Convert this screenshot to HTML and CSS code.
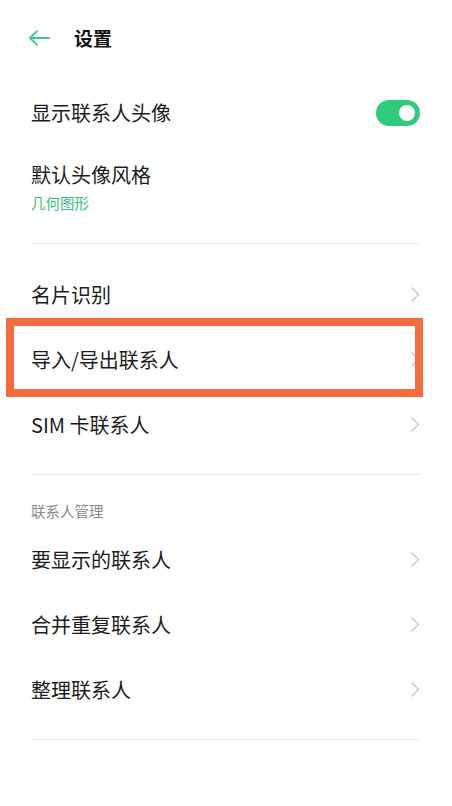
FILE: index.html
```html
<!DOCTYPE html>
<html lang="zh-CN">
<head>
<meta charset="utf-8">
<title>设置</title>
<link rel="stylesheet" href="styles.css">
</head>
<body>
<div class="page">
  <header class="topbar">
    <svg class="back" width="22" height="16" viewBox="0 0 22 16"><path d="M21 8H2M9 1.2L2 8l7 6.8" fill="none" stroke="#3ec886" stroke-width="1.8" stroke-linecap="round" stroke-linejoin="round"/></svg>
    <h1 class="title">设置</h1>
  </header>

  <section class="group group-first">
    <div class="row">
      <span class="label">显示联系人头像</span>
      <span class="switch"><span class="knob"></span></span>
    </div>
    <div class="row-two">
      <span class="label">默认头像风格</span>
      <span class="sub">几何图形</span>
    </div>
  </section>
  <div class="divider"></div>

  <section class="group group-mid">
    <div class="row">
      <span class="label">名片识别</span>
      <svg class="chev" width="10" height="17" viewBox="0 0 10 17"><path d="M1.5 1.5l7 7-7 7" fill="none" stroke="#c6c6c6" stroke-width="1.4"/></svg>
    </div>
    <div class="row highlight-host">
      <span class="label">导入/导出联系人</span>
      <svg class="chev" width="10" height="17" viewBox="0 0 10 17"><path d="M1.5 1.5l7 7-7 7" fill="none" stroke="#c6c6c6" stroke-width="1.4"/></svg>
      <div class="highlight"></div>
    </div>
    <div class="row">
      <span class="label">SIM 卡联系人</span>
      <svg class="chev" width="10" height="17" viewBox="0 0 10 17"><path d="M1.5 1.5l7 7-7 7" fill="none" stroke="#c6c6c6" stroke-width="1.4"/></svg>
    </div>
  </section>
  <div class="divider"></div>

  <section class="group group-last">
    <div class="section-title">联系人管理</div>
    <div class="row">
      <span class="label">要显示的联系人</span>
      <svg class="chev" width="10" height="17" viewBox="0 0 10 17"><path d="M1.5 1.5l7 7-7 7" fill="none" stroke="#c6c6c6" stroke-width="1.4"/></svg>
    </div>
    <div class="row">
      <span class="label">合并重复联系人</span>
      <svg class="chev" width="10" height="17" viewBox="0 0 10 17"><path d="M1.5 1.5l7 7-7 7" fill="none" stroke="#c6c6c6" stroke-width="1.4"/></svg>
    </div>
    <div class="row">
      <span class="label">整理联系人</span>
      <svg class="chev" width="10" height="17" viewBox="0 0 10 17"><path d="M1.5 1.5l7 7-7 7" fill="none" stroke="#c6c6c6" stroke-width="1.4"/></svg>
    </div>
  </section>
  <div class="divider"></div>
</div>
</body>
</html>
```
FILE: styles.css
```css
* { box-sizing: border-box; }
html, body {
  margin: 0;
  padding: 0;
  background: #ffffff;
}
body {
  font-family: "Noto Sans CJK SC", "Noto Sans", sans-serif;
  color: #1c1c1c;
}
.page {
  width: 452px;
  min-height: 806px;
  display: flex;
  flex-direction: column;
}
.topbar {
  height: 76px;
  display: flex;
  align-items: center;
  padding-left: 28px;
  gap: 24px;
}
.back { display: block; }
.title {
  margin: 0;
  font-size: 19px;
  font-weight: 700;
  line-height: 28px;
  color: #111;
}
.group {
  display: flex;
  flex-direction: column;
  padding: 0 32px 0 31px;
}
.group-first { padding-top: 5px; padding-bottom: 29px; }
.group-mid { padding-top: 18px; padding-bottom: 17px; }
.group-last { padding-top: 26px; padding-bottom: 17px; }
.row {
  height: 65px;
  display: flex;
  align-items: center;
  justify-content: space-between;
}
.group-first .row { height: 64px; }
.label {
  font-size: 20px;
  line-height: 28px;
  color: #1c1c1c;
}
.row-two {
  display: flex;
  flex-direction: column;
  padding-top: 16px;
  gap: 3px;
}
.sub {
  font-size: 14.5px;
  line-height: 22px;
  color: #38c07a;
}
.switch {
  width: 44px;
  height: 26px;
  border-radius: 13px;
  background: #2fca7c;
  display: flex;
  align-items: center;
  justify-content: flex-end;
  padding-right: 5px;
}
.knob {
  width: 16px;
  height: 16px;
  border-radius: 50%;
  background: #fff;
}
.chev { display: block; flex: none; }
.divider {
  height: 1px;
  margin: 0 32px 0 31px;
  background: #e8e8e8;
}
.section-title {
  font-size: 14.5px;
  line-height: 20px;
  color: #8a8a8a;
  margin-bottom: 6px;
}
.highlight-host { position: relative; }
.highlight {
  position: absolute;
  left: -25px;
  right: -3px;
  top: -9px;
  bottom: -5px;
  border: 8px solid #f46b3d;
  pointer-events: none;
}
```
